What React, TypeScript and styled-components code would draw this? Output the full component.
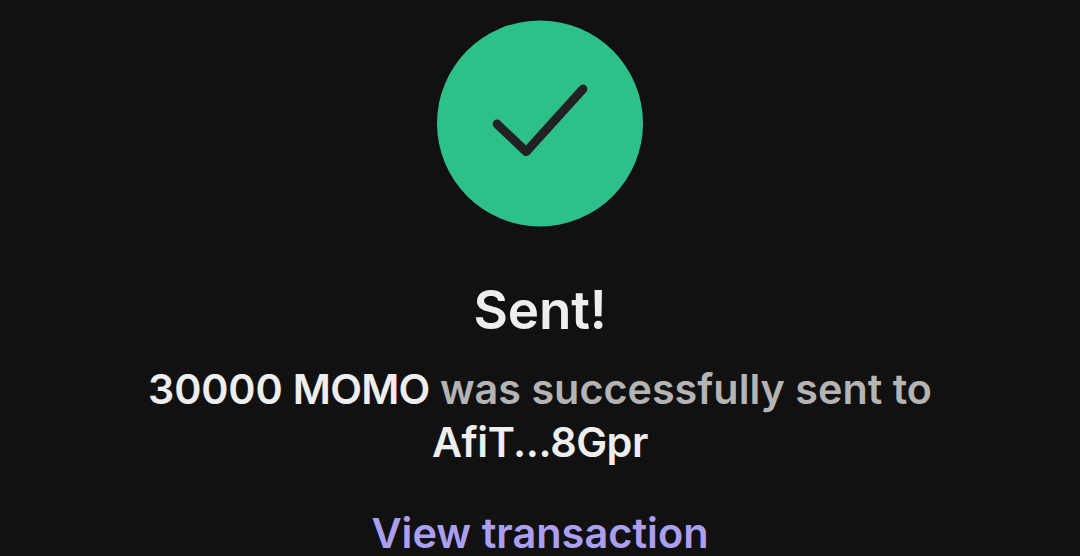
import React from "react";
import styled, { createGlobalStyle } from "styled-components";

const GlobalStyle = createGlobalStyle`
  html, body { margin: 0; padding: 0; background: #111111; }
  body { overflow: hidden; font-family: Inter, sans-serif; }
`;

const Screen = styled.main`
  box-sizing: border-box;
  height: 556px;
  overflow: hidden;
  display: flex;
  flex-direction: column;
  align-items: center;
  padding-top: 20px;
  background: #111111;
  color: #eeeeee;
  text-align: center;
`;

const SuccessBadge = styled.div`
  flex: none;
  width: 206px;
  height: 206px;
  svg { display: block; overflow: visible; }
`;

const Title = styled.h1`
  flex: none;
  margin: 52px 0 0;
  font-size: 53px;
  line-height: 64px;
  font-weight: 600;
  letter-spacing: -0.2px;
`;

const Message = styled.p`
  flex: none;
  width: 860px;
  margin: 21px 0 0;
  font-size: 41.3px;
  line-height: 53px;
  font-weight: 600;
  color: #b4b4b4;
`;

const Strong = styled.span<{ $tracking: number }>`
  color: #eeeeee;
  letter-spacing: ${({ $tracking }) => $tracking}px;
`;

const TransactionLink = styled.a`
  flex: none;
  margin-top: 42px;
  font-size: 41.5px;
  line-height: 44px;
  font-weight: 600;
  color: #ab9ff2;
  text-decoration: none;
`;

export default function App() {
  return (
    <>
      <GlobalStyle />
      <Screen>
        <SuccessBadge>
          <svg width="206" height="206" viewBox="0 0 206 206" fill="none" aria-hidden="true">
            <circle cx="103" cy="103.4" r="103" fill="#2ec08b" />
            <path d="M60 104L89.2 131.7L146 69" stroke="#222222" strokeWidth="8.8" strokeLinecap="round" strokeLinejoin="round" />
          </svg>
        </SuccessBadge>
        <Title>Sent!</Title>
        <Message>
          <Strong $tracking={-0.15}>30000 </Strong>
          <Strong $tracking={-0.7}>MOMO</Strong> was successfully sent to{" "}
          <Strong $tracking={-0.45}>AfiT...8Gpr</Strong>
        </Message>
        <TransactionLink>View transaction</TransactionLink>
      </Screen>
    </>
  );
}
